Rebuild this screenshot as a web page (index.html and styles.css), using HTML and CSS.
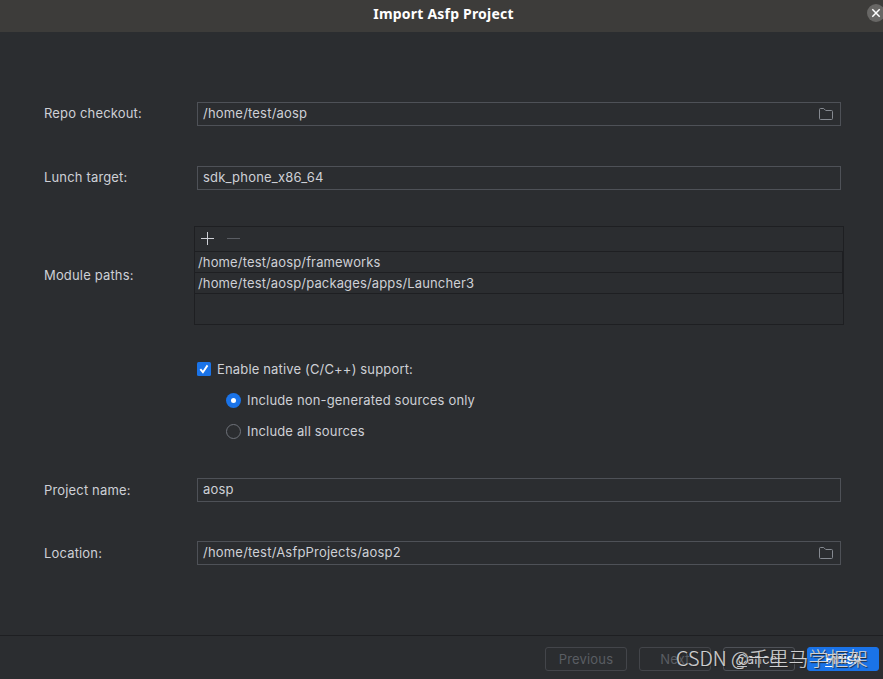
FILE: index.html
```
<!DOCTYPE html>
<html lang="en">
<head>
<meta charset="utf-8">
<title>Import Asfp Project</title>
<link rel="stylesheet" href="styles.css">
</head>
<body>
<div class="dialog">
  <header class="titlebar">
    <h1 class="title">Import Asfp Project</h1>
    <svg class="close" width="18" height="18" viewBox="0 0 18 18"><circle cx="9" cy="9" r="9" fill="#686765"/><path d="M5.3 5.3l7.4 7.4M12.7 5.3l-7.4 7.4" stroke="#fff" stroke-width="1.5"/></svg>
  </header>
  <main class="form">
    <div class="row repo">
      <span class="label raised">Repo checkout:</span>
      <div class="field"><span>/home/test/aosp</span><svg class="folder" width="16" height="16" viewBox="0 0 16 16"><path d="M1.5 3.5q0-1 1-1h3.2l2 2h5.8q1 0 1 1v7q0 1-1 1h-11q-1 0-1-1z"/></svg></div>
    </div>
    <div class="row lunch">
      <span class="label raised">Lunch target:</span>
      <div class="field"><span>sdk_phone_x86_64</span></div>
    </div>
    <div class="row modules">
      <span class="label raised">Module paths:</span>
      <div class="table">
        <div class="toolbar">
          <svg width="13" height="13" viewBox="0 0 13 13"><path d="M6.5 0v13M0 6.5h13" stroke="#ced0d6"/></svg>
          <svg width="13" height="13" viewBox="0 0 13 13"><path d="M0 6.5h13" stroke="#5a5d63"/></svg>
        </div>
        <div class="path">/home/test/aosp/frameworks</div>
        <div class="path">/home/test/aosp/packages/apps/Launcher3</div>
      </div>
    </div>
    <div class="options">
      <div class="option"><svg width="14" height="14" viewBox="0 0 14 14"><rect width="14" height="14" rx="1.5" fill="#1a73e8"/><path d="M3.3 7.2l2.6 3 4.6-6.8" fill="none" stroke="#fff" stroke-width="1.9"/></svg><span>Enable native (C/C++) support:</span></div>
      <div class="option nested"><svg width="15" height="15" viewBox="0 0 15 15"><circle cx="7.5" cy="7.5" r="7.5" fill="#1a73e8"/><circle cx="7.5" cy="7.5" r="2.5" fill="#fff"/></svg><span>Include non-generated sources only</span></div>
      <div class="option nested"><svg width="15" height="15" viewBox="0 0 15 15"><circle cx="7.5" cy="7.5" r="7" fill="none" stroke="#6f737a"/></svg><span>Include all sources</span></div>
    </div>
    <div class="row project">
      <span class="label">Project name:</span>
      <div class="field"><span>aosp</span></div>
    </div>
    <div class="row location">
      <span class="label">Location:</span>
      <div class="field"><span>/home/test/AsfpProjects/aosp2</span><svg class="folder" width="16" height="16" viewBox="0 0 16 16"><path d="M1.5 3.5q0-1 1-1h3.2l2 2h5.8q1 0 1 1v7q0 1-1 1h-11q-1 0-1-1z"/></svg></div>
    </div>
  </main>
  <footer class="footer">
    <div class="button wide disabled">Previous</div>
    <div class="button disabled">Next</div>
    <div class="button"><u>C</u>ancel</div>
    <div class="button primary"><u>F</u>inish</div>
  </footer>
  <div class="watermark">CSDN @千里马学框架</div>
</div>
</body>
</html>
```
FILE: styles.css
```
* { box-sizing: border-box; }
body {
  margin: 0;
  background: #2b2d30;
  color: #ced0d6;
  font: 13px/16px Inter, "Liberation Sans", sans-serif;
  letter-spacing: 0.16px;
}
svg { display: block; flex: none; }
.dialog {
  position: relative;
  display: flex;
  flex-direction: column;
  height: 679px;
  overflow: hidden;
}
.titlebar {
  position: relative;
  flex: none;
  height: 32px;
  background: #3d3c3a;
  text-align: center;
}
.title {
  margin: 0;
  padding: 4px 0 0 4px;
  color: #fff;
  font: bold 14px/20px "Noto Sans", sans-serif;
  letter-spacing: 0.2px;
}
.close { position: absolute; top: 4px; left: 867px; }
.form { flex: 1; padding: 70px 39px 0 44px; }
.row { display: flex; align-items: center; margin-right: 3px; }
.label { flex: none; width: 153px; }
.raised { padding-bottom: 2px; }
.field {
  display: flex;
  flex: 1;
  align-items: center;
  justify-content: space-between;
  height: 24px;
  padding: 0 6px 0 5px;
  border: 1px solid #4e5157;
  letter-spacing: 0.2px;
}
.field span { padding-bottom: 2px; }
.folder { fill: none; stroke: #868a91; }
.lunch { margin-top: 40px; }
.modules { margin: 36px 0 0; }
.modules .label { width: 150px; }
.table { flex: 1; height: 99px; border: 1px solid #1e1f22; }
.toolbar {
  display: flex;
  gap: 13px;
  height: 25px;
  padding: 5px 6px;
  border-bottom: 1px solid #1e1f22;
}
.path {
  height: 21px;
  padding: 2px 3px;
  border-right: 1px solid #1e1f22;
  border-bottom: 1px solid #1e1f22;
  letter-spacing: 0.14px;
}
.options {
  display: flex;
  flex-direction: column;
  gap: 15px;
  margin: 36px 0 0 153px;
}
.option { display: flex; align-items: center; gap: 6px; }
.nested { padding-left: 29px; }
.project { margin-top: 39px; }
.location { margin-top: 39px; }
.footer {
  display: flex;
  flex: none;
  gap: 12px;
  justify-content: flex-end;
  height: 44px;
  padding: 11px 4px 0 0;
  border-top: 1px solid #1e1f22;
}
.button {
  width: 72px;
  height: 24px;
  border: 1px solid #4e5157;
  border-radius: 3px;
  line-height: 23px;
  text-align: center;
}
.button u { text-underline-offset: 2px; }
.wide { width: 82px; }
.disabled { border-color: #43454a; color: #5a5d63; }
.primary {
  border-color: #1a73e8;
  background: #1a73e8;
  color: #fff;
  font-weight: 600;
  letter-spacing: -0.3px;
}
.watermark {
  position: absolute;
  top: 645px;
  left: 676px;
  color: #d0d1d2;
  font: 300 19.8px/26px "Noto Sans CJK SC", sans-serif;
  letter-spacing: 0;
  text-shadow: 1px 1px 1px #222;
  -webkit-text-stroke: 0.2px #d0d1d2;
  white-space: nowrap;
}
```
